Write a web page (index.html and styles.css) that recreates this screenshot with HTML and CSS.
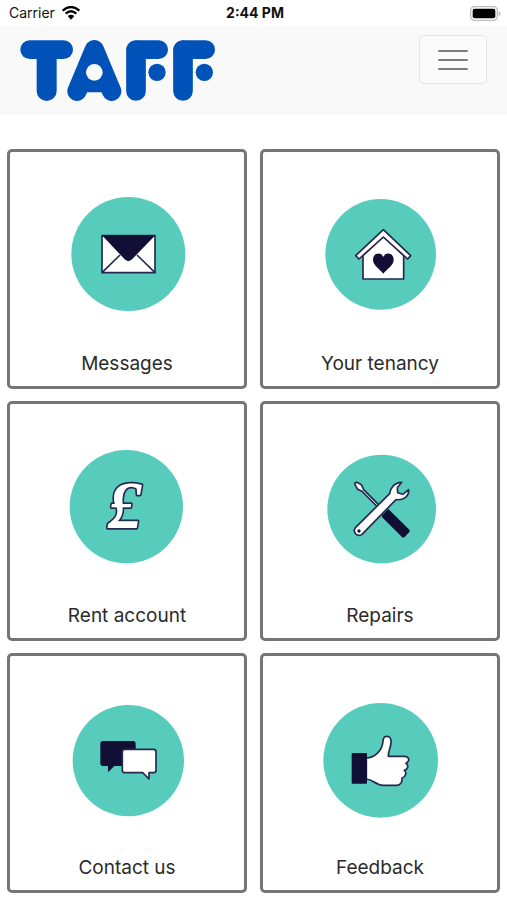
FILE: index.html
```html
<!DOCTYPE html>
<html lang="en">
<head>
  <meta charset="utf-8">
  <meta name="viewport" content="width=device-width, initial-scale=1">
  <title>Taff</title>
  <link rel="stylesheet" href="styles.css">
</head>
<body>
  <div class="status">
    <div class="status-carrier">
      <span>Carrier</span>
      <svg class="wifi" viewBox="0 0 54 42" aria-hidden="true">
        <path d="M2 14Q27 -8 52 14M11 23Q27 9 43 23" fill="none" stroke="#000" stroke-width="7"/>
        <path d="M17 30Q27 22 37 30L27 41Z"/>
      </svg>
    </div>
    <time class="status-time">2:44 PM</time>
    <div class="status-battery">
      <svg class="battery" viewBox="0 0 93 45" aria-hidden="true">
        <rect x="2" y="2" width="80" height="41" rx="12" fill="#fff" stroke="#bdbdb9" stroke-width="4"/>
        <rect x="8" y="8" width="68" height="29" rx="6"/>
        <path d="M86 16Q92 18 92 23T86 30Z" fill="#bdbdb9"/>
      </svg>
    </div>
  </div>

  <header class="navbar">
    <a class="brand" href="#" aria-label="Taff home">
      <svg class="logo" viewBox="54 114 600 198" aria-hidden="true">
        <g fill="none" stroke="#0052b8" stroke-linecap="round" stroke-linejoin="round">
          <path stroke-width="56" d="M89 149H191"/>
          <path stroke-width="60" d="M140 155V273"/>
          <path stroke-width="58" d="M231 274L283 149L335 274"/>
          <path stroke-width="56" d="M407 149H476M548 149H617"/>
          <path stroke-width="59" d="M408 151V273M549 151V273"/>
        </g>
        <path fill="#0052b8" d="M283 160L240 277H326Z"/>
        <circle cx="283" cy="217" r="25" fill="#f9f9f9"/>
        <circle cx="471" cy="217" r="26" fill="#0052b8"/>
        <circle cx="613" cy="217" r="26" fill="#0052b8"/>
      </svg>
    </a>
    <button class="toggler" type="button" aria-label="Toggle navigation">
      <span class="bar"></span>
      <span class="bar"></span>
      <span class="bar"></span>
    </button>
  </header>

  <main class="tiles">
    <a class="tile" href="#">
      <svg class="icon" viewBox="201 162 360 360" aria-hidden="true">
        <circle class="disc" cx="385" cy="342" r="171"/>
        <rect class="light" x="306" y="287" width="159" height="111"/>
        <path class="line" d="M306 398L360 345M465 398L411 345"/>
        <path class="dark" d="M306 286H466L396 358Q385 369 374 358Z"/>
      </svg>
      <span class="label">Messages</span>
    </a>
    <a class="tile" href="#">
      <svg class="icon" viewBox="198 162 360 360" aria-hidden="true">
        <circle class="disc" cx="380" cy="343" r="166"/>
        <path class="light" d="M327 346L388 290L449 346V417H327Z"/>
        <path class="light" d="M388 269L470 347L461 357L388 291L315 357L305 347Z"/>
        <path class="dark" d="M388 401C378 387 357 377 357 359C357 338 382 335 388 351C394 335 419 338 419 359C419 377 398 387 388 401Z"/>
      </svg>
      <span class="label">Your tenancy</span>
    </a>
    <a class="tile" href="#">
      <svg class="icon" viewBox="21 18 360 360" aria-hidden="true">
        <circle class="disc" cx="199" cy="200" r="170"/>
        <text class="pound" x="194" y="264" text-anchor="middle">£</text>
      </svg>
      <span class="label">Rent account</span>
    </a>
    <a class="tile" href="#">
      <svg class="icon" viewBox="15 18 360 360" aria-hidden="true">
        <circle class="disc" cx="200" cy="207" r="163"/>
        <path class="light" d="M120 134Q118 127 126 127L139 134L146 149L193 196L188 201L141 154L128 148Z"/>
        <path class="dark" d="M202 225L220 207L283 269Q286 273 283 276L269 291Q265 294 261 291L203 233Q198 229 202 225Z"/>
        <path class="light" d="M122 262L224 161C225 146 238 127 260 127L247 143L248 158L263 163L281 149C283 168 267 181 243 179L141 283C126 293 111 275 122 262Z"/>
        <circle class="dark" cx="132" cy="273" r="5"/>
      </svg>
      <span class="label">Repairs</span>
    </a>
    <a class="tile" href="#">
      <svg class="icon" viewBox="21 24 360 360" aria-hidden="true">
        <circle class="disc" cx="205" cy="212" r="167"/>
        <path class="dark" d="M129 153H219Q227 153 227 161V228H163L144 247V228H129Q121 228 121 220V161Q121 153 129 153Z"/>
        <path class="light" d="M194 178H281Q288 178 288 185V241Q288 248 281 248H267V267L248 248H194Q187 248 187 241V185Q187 178 194 178Z"/>
      </svg>
      <span class="label">Contact us</span>
    </a>
    <a class="tile" href="#">
      <svg class="icon" viewBox="15 24 360 360" aria-hidden="true">
        <circle class="disc" cx="197" cy="211" r="172"/>
        <path class="light" d="M154 204C181 202 200 181 203 160C205 146 205 139 215 139C226 139 229 147 228 158C227 175 219 185 220 199H268C284 199 285 215 273 220C282 226 279 238 268 241C276 248 272 261 261 264C262 276 257 286 245 286H205C181 286 175 268 154 267Z"/>
        <rect class="dark" x="110" y="189" width="46" height="92" rx="3"/>
      </svg>
      <span class="label">Feedback</span>
    </a>
  </main>
</body>
</html>
```
FILE: styles.css
```css
* {
  box-sizing: border-box;
}

body {
  margin: 0;
  background: #fff;
  color: #2b2b2b;
  font-family: Inter, "Liberation Sans", sans-serif;
}

.status {
  display: grid;
  grid-template-columns: 1fr auto 1fr;
  align-items: center;
  height: 26px;
  padding: 0 6px 0 9px;
  color: #111;
  font-size: 14px;
  line-height: 26px;
}

.status-carrier {
  display: flex;
  align-items: center;
  gap: 7px;
}

.status-time {
  font-size: 14px;
  font-weight: 700;
}

.status-battery {
  display: flex;
  justify-content: flex-end;
}

.wifi {
  width: 18px;
  height: 14px;
}

.battery {
  width: 31px;
  height: 15px;
}

.navbar {
  display: flex;
  align-items: flex-start;
  justify-content: space-between;
  height: 89px;
  padding: 9px 20px 0 18px;
  background: #f9f9f9;
}

.brand {
  display: block;
  padding-top: 3px;
}

.logo {
  display: block;
  width: 200px;
  height: 66px;
}

.toggler {
  display: flex;
  flex-direction: column;
  align-items: center;
  justify-content: center;
  gap: 7px;
  width: 68px;
  height: 49px;
  padding: 0;
  border: 1px solid #e3e3e3;
  border-radius: 5px;
  background: #fbfbfb;
}

.bar {
  width: 30px;
  height: 2px;
  border-radius: 1px;
  background: #7d7d7d;
}

.tiles {
  display: grid;
  grid-template-columns: 1fr 1fr;
  gap: 12px 13px;
  padding: 34px 7px 7px;
}

.tile {
  display: flex;
  flex-direction: column;
  align-items: center;
  height: 240px;
  padding-top: 42px;
  border: 3px solid #757575;
  border-radius: 5px;
  color: inherit;
  text-decoration: none;
}

.icon {
  width: 120px;
  height: 120px;
}

.label {
  margin-top: 38px;
  font-size: 19px;
  line-height: 24px;
}

.disc {
  fill: #57ccbc;
}

.light {
  fill: #fff;
  stroke: #252850;
  stroke-width: 5px;
  stroke-linejoin: round;
}

.dark {
  fill: #110f36;
}

.line {
  fill: none;
  stroke: #252850;
  stroke-width: 5px;
}

.pound {
  fill: #fff;
  stroke: #252850;
  stroke-width: 10px;
  stroke-linejoin: round;
  paint-order: stroke;
  font-family: "Liberation Serif", serif;
  font-size: 204px;
  font-style: italic;
  font-weight: 700;
}
```
